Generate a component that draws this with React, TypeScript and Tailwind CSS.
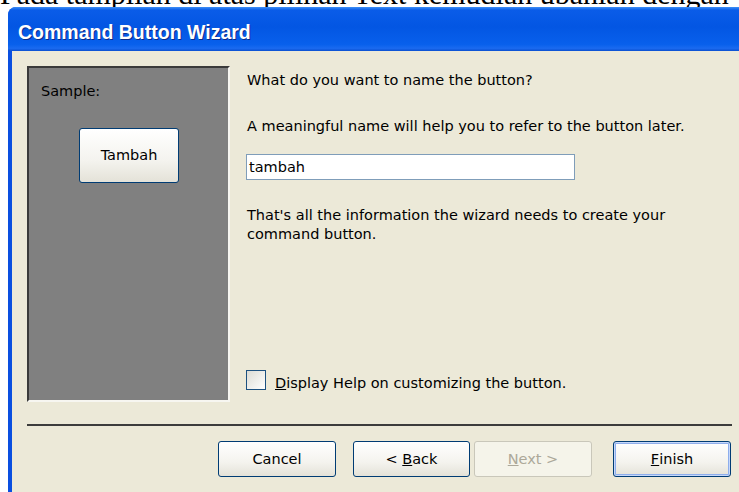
import React from 'react'

const font = "font-['DejaVu_Sans',sans-serif] text-[14.5px] leading-[17px]"
const body = `${font} text-black`

// XP style push button
function XpButton({
  children,
  variant = 'normal',
  className = '',
}: {
  children: React.ReactNode
  variant?: 'normal' | 'default' | 'disabled'
  className?: string
}) {
  const look =
    variant === 'disabled'
      ? 'border-[#c9c7ba] bg-[#f5f4ea] text-[#aca899]'
      : variant === 'default'
        ? 'border-[#003c74] bg-[linear-gradient(to_bottom,#ffffff,#f4f3ee_60%,#e4e2d8)] text-black shadow-[inset_0_0_0_1px_#c6d8fa,inset_0_0_0_2px_#8eaeec]'
        : 'border-[#003c74] bg-[linear-gradient(to_bottom,#ffffff,#f4f3ee_60%,#e4e2d8)] text-black'
  return (
    <div
      className={`flex items-center justify-center rounded-[3px] border ${look} ${font} ${className}`}
    >
      {children}
    </div>
  )
}

export default function App() {
  return (
    <div className="w-[739px] h-[492px] overflow-hidden bg-white">
      {/* tail of the paragraph above the dialog */}
      <div className="h-[7px] overflow-hidden">
        <p className="-mt-[21px] whitespace-nowrap font-['Liberation_Serif',serif] text-[30px] leading-[30px] text-black">
          Pada tampilan di atas pilihan Text kemudian ubahlah dengan
        </p>
      </div>

      <div className="ml-[8px] flex flex-col rounded-tl-[8px] bg-[#0a4fe0] overflow-hidden">
        {/* title bar */}
        <div className="h-[44px] pl-[10px] pt-[14px] bg-[linear-gradient(to_bottom,#3d8ff7_0%,#0a5ce8_7%,#0356e3_45%,#0860ec_85%,#1a6af0_94%,#0a4fd0_100%)]">
          <span className="font-['Liberation_Sans',sans-serif] text-[19.5px] leading-[22px] font-bold text-white [text-shadow:1px_1px_0_#0b2a8a]">
            Command Button Wizard
          </span>
        </div>

        {/* dialog body */}
        <div className="ml-[4px] h-[441px] bg-[#ece9d8] pl-[15px] pr-[7px] pt-[15px] flex flex-col">
          <div className="flex h-[336px]">
            {/* sample preview */}
            <div className="w-[203px] border-t-2 border-l-2 border-t-[#3a3a3a] border-l-[#3a3a3a] border-b-2 border-r-2 border-b-[#f7f6f1] border-r-[#f7f6f1] bg-[#808080] pl-[12px] pt-[15px]">
              <div className={body}>Sample:</div>
              <XpButton className="ml-[38px] mt-[28px] w-[100px] h-[55px]">Tambah</XpButton>
            </div>

            {/* questions */}
            <div className={`ml-[16px] flex flex-1 flex-col ${body}`}>
              <p className="mt-[6px] pl-[1px]">What do you want to name the button?</p>
              <p className="mt-[29px] pl-[1px]">A meaningful name will help you to refer to the button later.</p>
              <div className="mt-[19px] flex h-[26px] w-[329px] items-center border border-[#7f9db9] bg-white pl-[2px]">
                tambah
              </div>
              <p className="mt-[26px] w-[440px] pl-[1px] leading-[19px]">
                That's all the information the wizard needs to create your command button.
              </p>
              <div className="mt-auto mb-[10px] flex items-start">
                <div className="h-[20px] w-[20px] border border-[#1c5180] bg-[linear-gradient(135deg,#dcdcd5,#ffffff)]" />
                <span className="ml-[9px] pt-[5px]">
                  <span className="underline">D</span>isplay Help on customizing the button.
                </span>
              </div>
            </div>
          </div>

          <div className="mt-[22px] h-[2px] bg-[#3c3c3c]" />

          <div className="mt-[15px] flex justify-end pr-[1px]">
            <XpButton className="w-[118px] h-[36px]">Cancel</XpButton>
            <XpButton className="ml-[17px] w-[117px] h-[36px]">
              &lt;&nbsp;<span className="underline">B</span>ack
            </XpButton>
            <XpButton variant="disabled" className="ml-[4px] w-[118px] h-[36px]">
              <span className="underline">N</span>ext&nbsp;&gt;
            </XpButton>
            <XpButton variant="default" className="ml-[21px] w-[118px] h-[36px]">
              <span className="underline">F</span>inish
            </XpButton>
          </div>
        </div>
      </div>
    </div>
  )
}
